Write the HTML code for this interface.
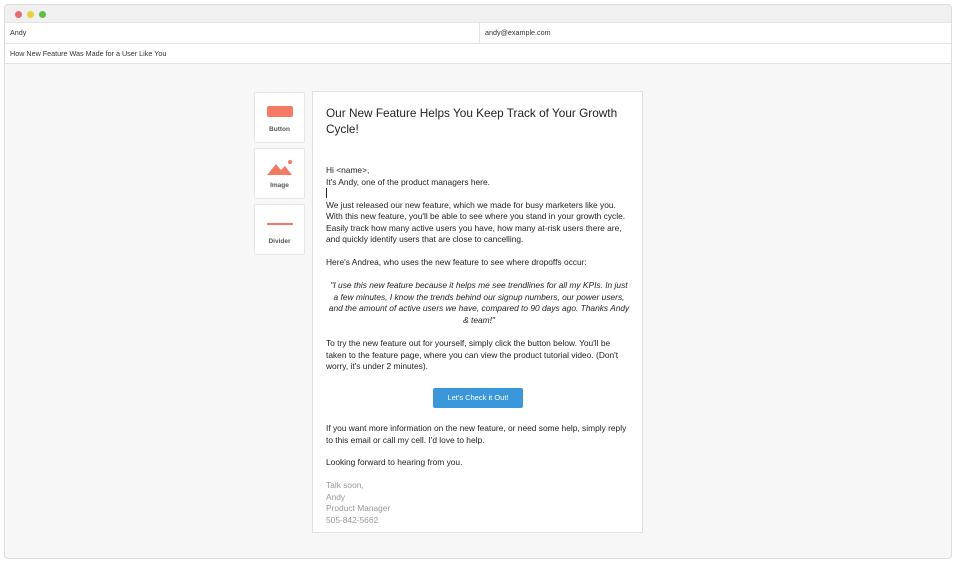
<!DOCTYPE html>
<html><head><style>
*{margin:0;padding:0;box-sizing:border-box}
body{width:957px;height:562px;background:#fff;font-family:"Liberation Sans",Arial,sans-serif;position:relative;overflow:hidden}
.win{position:absolute;left:4px;top:4px;width:948px;height:555px;border:1px solid #ddd;border-radius:4px;background:#f7f7f7;overflow:hidden}
.bar{height:17px;background:#f0f0f0;position:relative}
.dot{position:absolute;top:6px;width:7px;height:7px;border-radius:50%}
.row{height:21px;background:#fff;border-top:1px solid #e2e2e2;font-size:7.2px;color:#333;line-height:20px;padding-left:5px;position:relative}
.card{position:absolute;left:249px;width:51px;height:51px;background:#fff;border:1px solid #e6e6e6;border-radius:2px;font-size:6.5px;font-weight:bold;color:#555;text-align:center}
.card span{position:absolute;left:0;right:0;top:33px}
.mail{position:absolute;left:307px;top:86px;width:331px;height:442px;background:#fff;border:1px solid #e0e0e0;color:#222}
h1{font-size:11.8px;font-weight:normal;line-height:16px;position:absolute;top:13px;left:13px;width:312px;color:#222}
.t{position:absolute;left:13px;width:306px;font-size:8.4px;line-height:11.5px}
.q{font-style:italic;text-align:center;left:8px;width:316px;font-size:8.4px;white-space:nowrap}
.g{color:#999}
.btn{position:absolute;left:120px;top:296px;width:90px;height:20px;background:#3a97d9;color:#fff;font-size:7.5px;text-align:center;line-height:20px;border-radius:2px}
</style></head><body>
<div class="win">
<div class="bar"><div class="dot" style="left:10px;background:#e56a72"></div><div class="dot" style="left:22px;background:#e8d23f"></div><div class="dot" style="left:34px;background:#5fbd4a"></div></div>
<div class="row">Andy<div style="position:absolute;left:474px;top:0;bottom:0;border-left:1px solid #e2e2e2;padding-left:5px">andy@example.com</div></div>
<div class="row" style="border-bottom:1px solid #e2e2e2">How New Feature Was Made for a User Like You</div>
<div class="card" style="top:87px"><div style="position:absolute;left:12px;top:13px;width:26px;height:11px;background:#f47a63;border-radius:2px"></div><span>Button</span></div>
<div class="card" style="top:143px"><svg style="position:absolute;left:12px;top:9px" width="26" height="18"><polygon points="0,17 9,6 14,12 18,8 25,17" fill="#f47a63"/><circle cx="23" cy="4" r="2" fill="#f47a63"/></svg><span>Image</span></div>
<div class="card" style="top:199px"><div style="position:absolute;left:12px;top:18px;width:26px;height:2px;background:#f47a63"></div><span>Divider</span></div>
<div class="mail">
<h1>Our New Feature Helps You Keep Track of Your Growth Cycle!</h1>
<div class="t" style="top:73px">Hi &lt;name&gt;,<br>It's Andy, one of the product managers here.<br><span style="border-left:1px solid #222">&nbsp;</span><br>We just released our new feature, which we made for busy marketers like you. With this new feature, you'll be able to see where you stand in your growth cycle. Easily track how many active users you have, how many at-risk users there are, and quickly identify users that are close to cancelling.</div>
<div class="t" style="top:165px">Here's Andrea, who uses the new feature to see where dropoffs occur:</div>
<div class="t q" style="top:188px">"I use this new feature because it helps me see trendlines for all my KPIs. In just<br>a few minutes, I know the trends behind our signup numbers, our power users,<br>and the amount of active users we have, compared to 90 days ago. Thanks Andy<br>&amp; team!"</div>
<div class="t" style="top:246px">To try the new feature out for yourself, simply click the button below. You'll be taken to the feature page, where you can view the product tutorial video. (Don't worry, it's under 2 minutes).</div>
<div class="btn">Let's Check it Out!</div>
<div class="t" style="top:331px">If you want more information on the new feature, or need some help, simply reply to this email or call my cell. I'd love to help.</div>
<div class="t" style="top:365px">Looking forward to hearing from you.</div>
<div class="t g" style="top:388px">Talk soon,<br>Andy<br>Product Manager<br>505-842-5662</div>
</div>
</div>
</body></html>
